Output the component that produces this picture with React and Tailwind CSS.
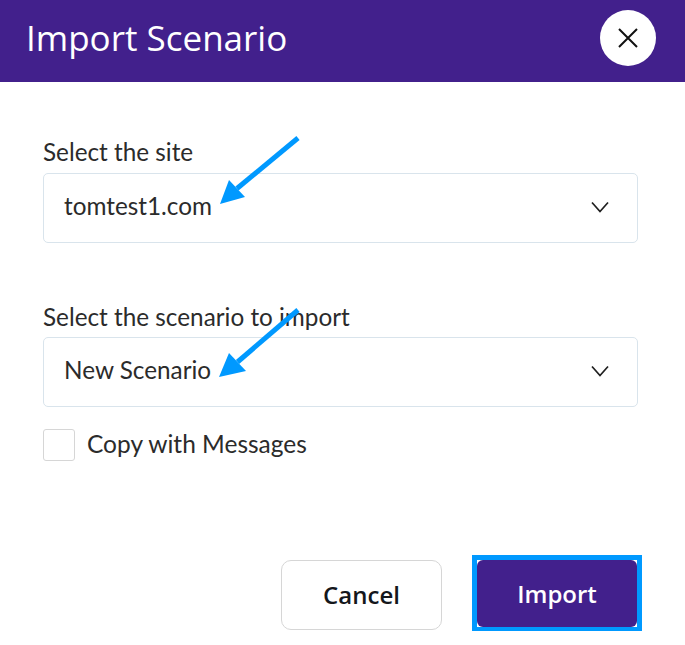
import React from 'react';

const Chevron = () => (
    <svg width="18" height="12" viewBox="0 0 18 12" fill="none" stroke="#1f1f1f" strokeWidth="1.7">
        <path d="M1 1.5 L9 10.5 L17 1.5" />
    </svg>
);

const SelectBox = ({ value }) => (
    <div className="flex h-[70px] w-[595px] items-center justify-between rounded-[5px] border border-[#d9e4ec] bg-white pl-[20px] pr-[28px] text-[24.3px] text-[#2b2b2b]">
        <span className="mb-[4px]">{value}</span>
        <div className="mb-[2px]"><Chevron /></div>
    </div>
);

const Arrow = ({ tail, tip, left, right }) => (
    <g>
        <line x1={tail[0]} y1={tail[1]} x2={(left[0] + right[0]) / 2} y2={(left[1] + right[1]) / 2} stroke="#0099ff" strokeWidth="5" />
        <polygon points={`${tip.join(',')} ${left.join(',')} ${right.join(',')}`} fill="#0099ff" />
    </g>
);

export default function App() {
    return (
        <div className="relative h-[645px] w-[685px] overflow-hidden bg-white font-['Lato',sans-serif]">
            {/* Header */}
            <div className="flex h-[82px] items-start justify-between bg-[#42208c] pl-[26px] pr-[29px] pt-[10px]">
                <h1 className="font-['Open_Sans',sans-serif] text-[35px] leading-[56px] text-white">Import Scenario</h1>
                <button className="flex h-[56px] w-[56px] items-center justify-center rounded-full bg-white">
                    <svg width="22" height="22" viewBox="0 0 22 22" fill="none" stroke="#111" strokeWidth="2">
                        <path d="M2 2 L20 20 M20 2 L2 20" />
                    </svg>
                </button>
            </div>

            {/* Form */}
            <div className="px-[43px] pt-[55px]">
                <label className="block text-[24.3px] leading-[30px] text-[#2b2b2b]">Select the site</label>
                <div className="mt-[6px]"><SelectBox value="tomtest1.com" /></div>

                <label className="mt-[59px] block text-[24.3px] leading-[30px] text-[#2b2b2b]">Select the scenario to import</label>
                <div className="mt-[5px]"><SelectBox value="New Scenario" /></div>

                <div className="mt-[22px] flex items-start gap-[12px]">
                    <div className="h-[32px] w-[32px] rounded-[3px] border border-[#d6d6d6] bg-white" />
                    <span className="text-[24.5px] leading-[30px] text-[#2b2b2b]">Copy with Messages</span>
                </div>
            </div>

            {/* Footer buttons */}
            <div className="absolute left-[281px] top-[555px] flex items-start gap-[30px] font-['Open_Sans',sans-serif] text-[24px] font-semibold">
                <button className="mt-[5px] h-[70px] w-[161px] rounded-[10px] border border-[#d6d6d6] bg-white text-[#14171c]">Cancel</button>
                <div className="border-[5px] border-b-[4px] border-[#0099ff] bg-white">
                    <button className="block h-[67px] w-[160px] rounded-[6px] bg-[#42208c] text-white">Import</button>
                </div>
            </div>

            {/* Annotation arrows */}
            <svg className="absolute left-0 top-0" width="685" height="645">
                <Arrow tail={[298, 138]} tip={[220, 204]} left={[229, 180]} right={[245, 197]} />
                <Arrow tail={[298, 310]} tip={[219, 377]} left={[229, 353]} right={[246, 371]} />
            </svg>
        </div>
    );
}
